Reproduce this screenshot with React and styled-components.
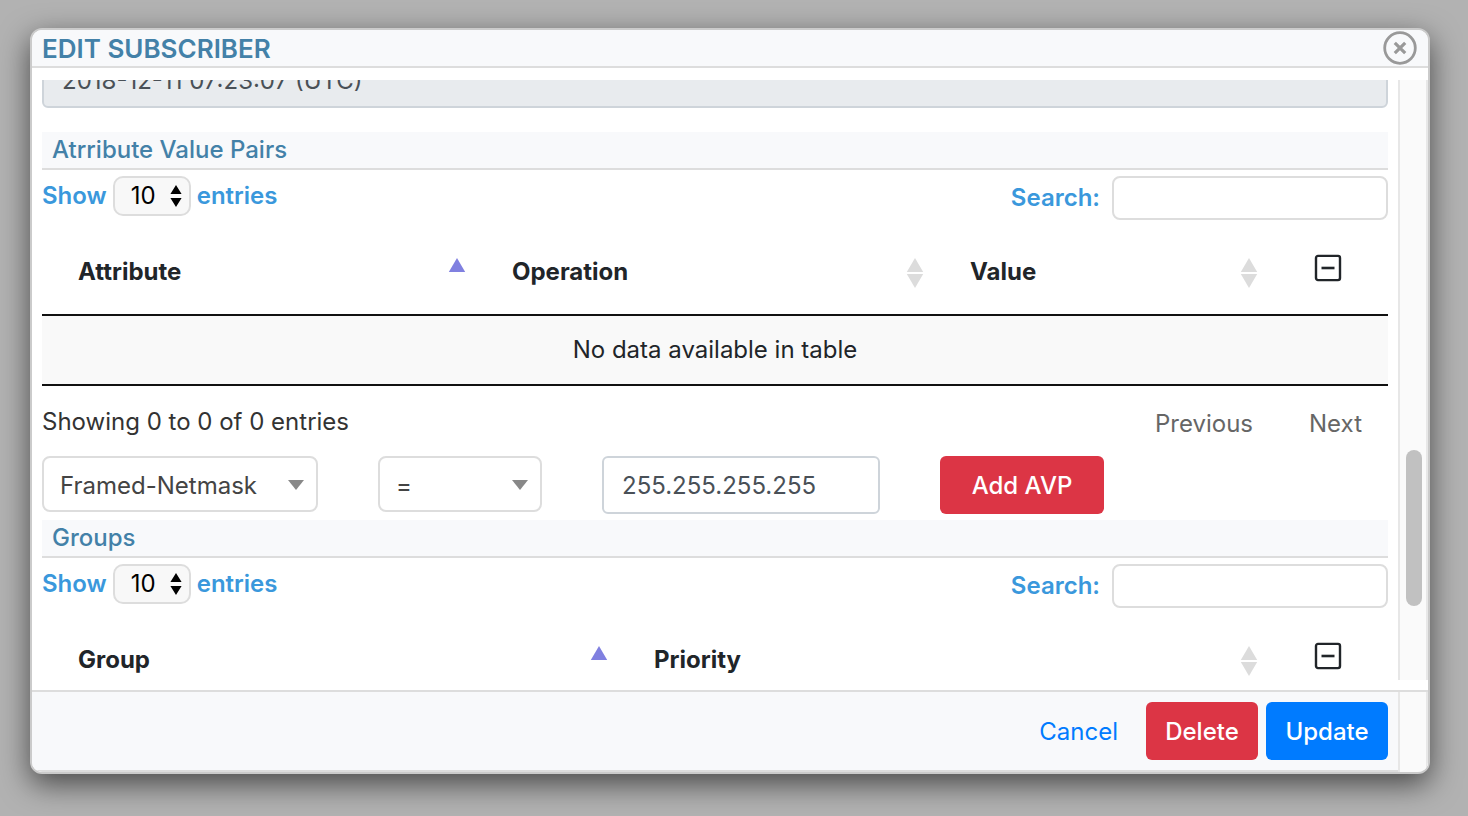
import React from "react";
import styled, { createGlobalStyle } from "styled-components";

const line = "#dddddd";

const GlobalStyle = createGlobalStyle`
  * { box-sizing: border-box; }
  body {
    margin: 0;
    background: #b2b2b2;
    color: #212529;
    font-family: Inter, "Liberation Sans", sans-serif;
    font-size: 24px;
    line-height: 36px;
  }
  button, input, select { font: inherit; margin: 0; }
`;

const Backdrop = styled.div`
  display: flex;
  height: 100vh;
  padding: 28px 38px 42px 30px;
`;

const Dialog = styled.section`
  flex: 1;
  min-width: 0;
  display: flex;
  flex-direction: column;
  border: 2px solid #cbcbcb;
  border-radius: 12px;
  background: #ffffff;
  overflow: hidden;
  box-shadow: 0 10px 30px rgba(0, 0, 0, 0.6);
`;

const Header = styled.header`
  display: flex;
  align-items: center;
  justify-content: space-between;
  height: 38px;
  padding: 0 11px 0 10px;
  background: #f8f9fb;
  border-bottom: 2px solid ${line};
`;

const Title = styled.h1`
  margin: 0;
  padding-top: 2px;
  font-size: 26px;
  font-weight: 600;
  color: #4381a8;
`;

const CloseButton = styled.button`
  display: flex;
  padding: 0;
  border: 0;
  background: none;
`;

const Body = styled.div`
  flex: 1;
  min-height: 0;
  display: flex;
  margin: 12px 0 10px;
  overflow: hidden;
`;

const Viewport = styled.div`
  flex: 1;
  min-width: 0;
  padding: 0 10px;
  overflow: hidden;
`;

const Scrolled = styled.div`
  margin-top: -30px;
`;

const Track = styled.div`
  width: 30px;
  padding: 370px 4px 0 6px;
  background: #fafafa;
  border: solid #e7e7e7;
  border-width: 0 2px;
`;

const Thumb = styled.div`
  height: 156px;
  border-radius: 8px;
  background: #c1c1c1;
`;

const TextInput = styled.input`
  display: block;
  width: ${(p) => p.$width || "100%"};
  height: 58px;
  padding: 0 18px;
  border: 2px solid #ced4da;
  border-radius: 6px;
  background: #ffffff;
  color: #495057;
  &:read-only { padding-top: 2px; background: #e8ebee; }
`;

const Section = styled.section`
  margin-top: ${(p) => p.$gap || 0}px;
`;

const SectionTitle = styled.h2`
  margin: 0;
  height: 38px;
  padding-left: 10px;
  background: #f8f9fb;
  border-bottom: 2px solid ${line};
  font-size: 24px;
  font-weight: 500;
  color: #4381a8;
`;

const Controls = styled.div`
  display: flex;
  justify-content: space-between;
  align-items: flex-start;
  padding: 6px 0 8px;
`;

const ControlLabel = styled.label`
  display: flex;
  align-items: center;
  gap: ${(p) => p.$gap}px;
  font-weight: 600;
  color: #3a98dc;
`;

const SelectBox = styled.span`
  display: inline-grid;
  width: ${(p) => p.$width}px;
  align-items: center;
  & > * { grid-area: 1 / 1; }
  & > svg { justify-self: end; margin-right: ${(p) => p.$inset}px; pointer-events: none; }
`;

const LengthSelect = styled.select`
  appearance: none;
  width: 100%;
  height: 40px;
  padding: 0 16px;
  border: 2px solid ${line};
  border-radius: 10px;
  background: #f8f8f8;
  color: #000000;
  font-weight: 400;
`;

const ChoiceSelect = styled.select`
  appearance: none;
  width: 100%;
  height: 56px;
  padding: 3px 16px 0;
  border: 2px solid ${line};
  border-radius: 8px;
  background: #ffffff;
  color: #444444;
`;

const SearchInput = styled.input`
  width: 276px;
  height: 44px;
  padding: 0 10px;
  border: 2px solid ${line};
  border-radius: 8px;
  background: #ffffff;
`;

const DataTable = styled.table`
  width: 100%;
  table-layout: fixed;
  border-collapse: separate;
  border-spacing: 0;
  border-bottom: 2px solid #111111;
`;

const HeadCell = styled.th`
  height: 88px;
  padding: 2px 10px 0 36px;
  border-bottom: 2px solid #111111;
  font-weight: 700;
  text-align: left;
`;

const HeadContent = styled.div`
  display: flex;
  align-items: center;
  justify-content: space-between;
`;

const ActionHead = styled.th`
  padding: 0;
  border-bottom: 2px solid #111111;
`;

const IconButton = styled.button`
  display: flex;
  margin: 0 auto;
  padding: 0;
  border: 0;
  background: none;
`;

const EmptyCell = styled.td`
  height: 68px;
  padding: 0;
  background: #f9f9f9;
  text-align: center;
`;

const TableFooter = styled.div`
  display: flex;
  justify-content: space-between;
  padding: 18px 0 16px;
  color: #333333;
`;

const Pager = styled.nav`
  display: flex;
  gap: 56px;
  padding-right: 26px;
`;

const PageButton = styled.button`
  padding: 4px 0 0;
  border: 0;
  background: none;
  color: #666666;
  line-height: 32px;
`;

const AvpForm = styled.form`
  display: flex;
  align-items: flex-start;
  gap: 60px;
  padding-bottom: 6px;
`;

const Button = styled.button`
  width: ${(p) => p.$width}px;
  height: 58px;
  padding: 2px 0 0;
  border: 0;
  border-radius: 6px;
  background: ${(p) => p.$color};
  color: #ffffff;
  font-weight: 500;
`;

const LinkButton = styled.button`
  padding: 2px 20px 0;
  border: 0;
  background: none;
  color: #007bff;
`;

const Footer = styled.footer`
  display: flex;
  height: 82px;
  background: #f8f9fb;
  border: solid ${line};
  border-width: 2px 0;
`;

const Actions = styled.div`
  flex: 1;
  display: flex;
  align-items: center;
  justify-content: flex-end;
  gap: 8px;
  padding-right: 10px;
`;

const CloseIcon = () => (
  <svg width="34" height="34" viewBox="0 0 34 34" fill="none" stroke="#999999">
    <circle cx="17" cy="17" r="15.3" strokeWidth="2.8" />
    <path d="M11.8 11.8l10.4 10.4M22.2 11.8L11.8 22.2" strokeWidth="3.2" />
  </svg>
);

const SortIcon = ({ active }) => (
  <svg width="18" height="32" viewBox="0 0 18 32" fill={active ? "#8080e0" : "#dcdcdc"}>
    <path d="M9 2L17.2 16H.8z" />
    {!active && <path d="M9 32L17.2 18H.8z" />}
  </svg>
);

const MinusIcon = () => (
  <svg width="28" height="34" viewBox="0 0 28 34" fill="none" stroke="#212529">
    <rect x="2" y="1.9" width="24" height="24.2" rx="2" strokeWidth="2.4" />
    <path d="M7.5 14h13" strokeWidth="2.6" />
  </svg>
);

const UpDownIcon = () => (
  <svg width="12" height="22" viewBox="0 0 12 22" fill="#000000">
    <path d="M6 0l5.6 9H.4zM6 22l5.6-9H.4z" />
  </svg>
);

const CaretIcon = () => (
  <svg width="16" height="12" viewBox="0 0 16 12" fill="#888888">
    <path d="M0 2h16L8 12z" />
  </svg>
);

const TableControls = () => (
  <Controls>
    <ControlLabel $gap={6}>
      Show
      <SelectBox $width={78} $inset={9}>
        <LengthSelect defaultValue="10">
          <option>10</option>
          <option>25</option>
          <option>50</option>
        </LengthSelect>
        <UpDownIcon />
      </SelectBox>
      entries
    </ControlLabel>
    <ControlLabel $gap={12}>
      Search:
      <SearchInput type="search" />
    </ControlLabel>
  </Controls>
);

const RecordsTable = ({ columns, emptyText }) => (
  <DataTable>
    <colgroup>
      {columns.map((c) => (
        <col key={c.name} width={c.width} />
      ))}
      <col width="120" />
    </colgroup>
    <thead>
      <tr>
        {columns.map((c, i) => (
          <HeadCell key={c.name} scope="col">
            <HeadContent>
              {c.name}
              <SortIcon active={i === 0} />
            </HeadContent>
          </HeadCell>
        ))}
        <ActionHead scope="col">
          <IconButton type="button" aria-label="Remove">
            <MinusIcon />
          </IconButton>
        </ActionHead>
      </tr>
    </thead>
    {emptyText && (
      <tbody>
        <tr>
          <EmptyCell colSpan={columns.length + 1}>{emptyText}</EmptyCell>
        </tr>
      </tbody>
    )}
  </DataTable>
);

const Choice = ({ label, width, value }) => (
  <SelectBox $width={width} $inset={14}>
    <ChoiceSelect aria-label={label} defaultValue={value}>
      <option>{value}</option>
    </ChoiceSelect>
    <CaretIcon />
  </SelectBox>
);

const avpColumns = [
  { name: "Attribute", width: 434 },
  { name: "Operation", width: 458 },
  { name: "Value", width: 334 },
];

const groupColumns = [
  { name: "Group", width: 576 },
  { name: "Priority", width: 650 },
];

export default function App() {
  return (
    <>
      <GlobalStyle />
      <Backdrop>
        <Dialog role="dialog" aria-labelledby="dialog-title">
          <Header>
            <Title id="dialog-title">EDIT SUBSCRIBER</Title>
            <CloseButton type="button" aria-label="Close">
              <CloseIcon />
            </CloseButton>
          </Header>
          <Body>
            <Viewport>
              <Scrolled>
                <TextInput aria-label="Date" readOnly value="2018-12-11 07:23:07 (UTC)" />
                <Section $gap={24}>
                  <SectionTitle>Atrribute Value Pairs</SectionTitle>
                  <TableControls />
                  <RecordsTable columns={avpColumns} emptyText="No data available in table" />
                  <TableFooter>
                    <span>Showing 0 to 0 of 0 entries</span>
                    <Pager aria-label="Pages">
                      <PageButton type="button">Previous</PageButton>
                      <PageButton type="button">Next</PageButton>
                    </Pager>
                  </TableFooter>
                  <AvpForm>
                    <Choice label="Attribute" width={276} value="Framed-Netmask" />
                    <Choice label="Operation" width={164} value="=" />
                    <TextInput aria-label="Value" $width="278px" defaultValue="255.255.255.255" />
                    <Button type="button" $width={164} $color="#dc3545">
                      Add AVP
                    </Button>
                  </AvpForm>
                </Section>
                <Section>
                  <SectionTitle>Groups</SectionTitle>
                  <TableControls />
                  <RecordsTable columns={groupColumns} />
                </Section>
              </Scrolled>
            </Viewport>
            <Track>
              <Thumb />
            </Track>
          </Body>
          <Footer>
            <Actions>
              <LinkButton type="button">Cancel</LinkButton>
              <Button type="button" $width={112} $color="#dc3545">
                Delete
              </Button>
              <Button type="button" $width={122} $color="#007bff">
                Update
              </Button>
            </Actions>
            <Track />
          </Footer>
        </Dialog>
      </Backdrop>
    </>
  );
}
